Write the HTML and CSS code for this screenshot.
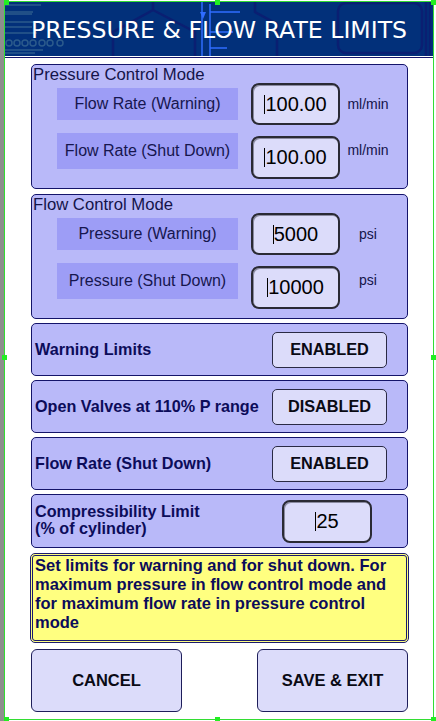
FILE: index.html
```html
<!DOCTYPE html>
<html>
<head>
<meta charset="utf-8">
<link rel="stylesheet" href="styles.css">
</head>
<body>
<div class="page">
  <div class="side-strip"></div>
  <div class="screen">
    <header class="titlebar">
      <svg class="circuit" width="428" height="54" viewBox="0 0 428 54">
        <g stroke="#2b5a8c" stroke-width="1.5" fill="none">
          <path d="M0 3H36M0 10H28M0 12H27M0 20H35M0 25H27M0 31H32M0 48H38M0 51H30"/>
          <circle cx="4" cy="41" r="3"/><circle cx="12" cy="41" r="3"/><circle cx="20" cy="41" r="3"/>
          <circle cx="28" cy="41" r="3"/><circle cx="37" cy="41" r="3"/><circle cx="45" cy="41" r="3"/>
          <circle cx="55" cy="41" r="3"/>
        </g>
        <g stroke="#0a1f72" stroke-width="2.5" fill="none">
          <path d="M148 0V8L108 30V54M148 8L190 30V54"/>
          <path d="M250 0V10L272 22V54"/>
          <rect x="333" y="1" width="84" height="50" rx="8"/>
          <path d="M421 0V54M425 0V54"/>
        </g>
        <g stroke="#2f6cff" stroke-width="1.5" fill="none">
          <path d="M197 0V54"/>
          <path d="M205 2V54M205 10H235M205 30H228M205 46H222"/>
        </g>
        <path d="M195 10L201 10L198 17Z" fill="#2f6cff"/>
      </svg>
      <h1 class="title">PRESSURE &amp; FLOW RATE LIMITS</h1>
    </header>
    <div class="titlebar-rule"></div>

    <main class="content">
      <section class="group">
        <div class="group-title">Pressure Control Mode</div>
        <div class="param-row">
          <div class="param-label param-label--short">Flow Rate (Warning)</div>
          <div class="field"><span class="caret"></span>100.00</div>
          <div class="unit">ml/min</div>
        </div>
        <div class="param-row param-row--split">
          <div class="param-label">Flow Rate (Shut Down)</div>
          <div class="field"><span class="caret"></span>100.00</div>
          <div class="unit">ml/min</div>
        </div>
      </section>

      <section class="group group--second">
        <div class="group-title">Flow Control Mode</div>
        <div class="param-row">
          <div class="param-label param-label--short">Pressure (Warning)</div>
          <div class="field"><span class="caret"></span>5000</div>
          <div class="unit">psi</div>
        </div>
        <div class="param-row param-row--split">
          <div class="param-label">Pressure (Shut Down)</div>
          <div class="field"><span class="caret"></span>10000</div>
          <div class="unit">psi</div>
        </div>
      </section>

      <div class="setting-row">
        <div class="setting-label">Warning Limits</div>
        <div class="toggle">ENABLED</div>
      </div>
      <div class="setting-row">
        <div class="setting-label">Open Valves at 110% P range</div>
        <div class="toggle">DISABLED</div>
      </div>
      <div class="setting-row">
        <div class="setting-label">Flow Rate (Shut Down)</div>
        <div class="toggle">ENABLED</div>
      </div>
      <div class="setting-row setting-row--tall">
        <div class="setting-label setting-label--two">Compressibility Limit<br>(% of cylinder)</div>
        <div class="field field--compress"><span class="caret"></span>25</div>
      </div>

      <div class="note">Set limits for warning and for shut down. For maximum pressure in flow control mode and for maximum flow rate in pressure control mode</div>

      <div class="actions">
        <div class="action-btn">CANCEL</div>
        <div class="action-btn">SAVE &amp; EXIT</div>
      </div>
    </main>
  </div>

  <div class="selection">
    <span class="handle h-tl"></span><span class="handle h-tm"></span><span class="handle h-tr"></span>
    <span class="handle h-ml"></span><span class="handle h-mr"></span>
    <span class="handle h-bl"></span><span class="handle h-bm"></span><span class="handle h-br"></span>
  </div>
</div>
</body>
</html>
```

FILE: styles.css
```css
html, body {
  margin: 0;
  padding: 0;
  background: #ffffff;
}

body {
  width: 436px;
  height: 721px;
  overflow: hidden;
  font-family: "Liberation Sans", Arial, sans-serif;
}

.page {
  position: relative;
  display: flex;
  width: 436px;
  height: 721px;
}

.side-strip {
  width: 4px;
  height: 100%;
  background: #8e8e8e;
  flex: none;
}

.screen {
  margin-left: 1px;
  width: 428px;
  display: flex;
  flex-direction: column;
}

.titlebar {
  position: relative;
  margin-top: 2px;
  height: 54px;
  background: #02307a;
  display: flex;
  align-items: center;
  justify-content: center;
  overflow: hidden;
}

.circuit {
  position: absolute;
  left: 0;
  top: 0;
}

.title {
  position: relative;
  margin: 0;
  padding-top: 1px;
  font-family: "DejaVu Sans", Verdana, sans-serif;
  font-weight: normal;
  font-size: 23.6px;
  color: #ffffff;
  white-space: nowrap;
}

.titlebar-rule {
  margin-top: 1px;
  height: 1px;
  background: #14146a;
}

.content {
  display: flex;
  flex-direction: column;
  gap: 4px;
  padding: 6px 0 0 26px;
}

.group {
  box-sizing: border-box;
  width: 377px;
  height: 125px;
  background: #b9b9f9;
  border: 1px solid #14146a;
  border-radius: 5px;
  padding: 1px 0 0 0;
  display: flex;
  flex-direction: column;
}

.group--second {
  margin-top: 1px;
}

.group-title {
  height: 17px;
  line-height: 17px;
  padding-left: 1px;
  font-size: 16.7px;
  color: #14144a;
  white-space: nowrap;
}

.param-row {
  display: flex;
  align-items: center;
  height: 42px;
  padding-left: 25px;
}

.param-row--split {
  align-items: flex-start;
  height: 46px;
  margin-top: 8px;
}

.param-label {
  box-sizing: border-box;
  width: 181px;
  height: 36px;
  background: #9d9df6;
  display: flex;
  align-items: center;
  justify-content: center;
  font-size: 16px;
  color: #16164e;
  white-space: nowrap;
}

.param-label--short {
  height: 32px;
}

.field {
  box-sizing: border-box;
  width: 89px;
  height: 42px;
  margin-left: 13px;
  background: #dcdcfa;
  border: 2px solid #2a2a34;
  border-radius: 8px;
  box-shadow: inset 1px 1px 0 #8a8aa0;
  display: flex;
  align-items: center;
  justify-content: center;
  font-size: 20px;
  color: #000000;
}

.param-row--split .field {
  margin-top: 3px;
  height: 43px;
}

.caret {
  display: inline-block;
  width: 1px;
  height: 19px;
  background: #000000;
}

.unit {
  width: 46px;
  margin-left: 5px;
  text-align: center;
  font-size: 14px;
  color: #14144a;
  line-height: 32px;
}

.param-row--split .unit {
  line-height: 34px;
}

.setting-row {
  box-sizing: border-box;
  width: 377px;
  height: 53px;
  background: #b9b9f9;
  border: 1px solid #14146a;
  border-radius: 5px;
  display: flex;
  align-items: center;
  padding-left: 3px;
}

.setting-row--tall {
  height: 54px;
}

.setting-label {
  font-weight: bold;
  font-size: 16.2px;
  color: #0c0c5a;
  white-space: nowrap;
}

.setting-label--two {
  line-height: 17px;
  margin-top: -3px;
}

.toggle {
  box-sizing: border-box;
  margin-left: auto;
  margin-right: 20px;
  width: 115px;
  height: 36px;
  background: #dcdcfa;
  border: 1.5px solid #2a2a44;
  border-radius: 5px;
  display: flex;
  align-items: center;
  justify-content: center;
  font-weight: bold;
  font-size: 16.3px;
  color: #0a0a14;
}

.field--compress {
  margin-left: auto;
  margin-right: 35px;
  width: 90px;
  height: 43px;
}

.note {
  box-sizing: border-box;
  width: 379px;
  height: 90px;
  margin: 1px 0 0 -1px;
  background: #ffff80;
  border: 3px double #1a1a6e;
  border-radius: 5px;
  padding: 0 4px 0 2px;
  font-weight: bold;
  font-size: 16.5px;
  line-height: 19px;
  color: #0c0c5a;
}

.actions {
  display: flex;
  justify-content: space-between;
  width: 377px;
  margin-top: 2px;
}

.action-btn {
  box-sizing: border-box;
  width: 151px;
  height: 63px;
  background: #dcdcfa;
  border: 1.5px solid #1e1e5a;
  border-radius: 6px;
  display: flex;
  align-items: center;
  justify-content: center;
  font-weight: bold;
  font-size: 16.5px;
  color: #0a0a14;
}

.selection {
  position: absolute;
  left: 4px;
  top: 1px;
  width: 428px;
  height: 717px;
  border: 1px solid #33dd33;
  pointer-events: none;
}

.handle {
  position: absolute;
  width: 5px;
  height: 5px;
  background: #22ee22;
}

.h-tl { left: -1px; top: -2px; }
.h-tm { left: 210px; top: -2px; }
.h-tr { right: -3px; top: -2px; }
.h-ml { left: -3px; top: 353px; }
.h-mr { right: -3px; top: 353px; }
.h-bl { left: -1px; bottom: -3px; }
.h-bm { left: 210px; bottom: -3px; }
.h-br { right: -3px; bottom: -3px; }
```
